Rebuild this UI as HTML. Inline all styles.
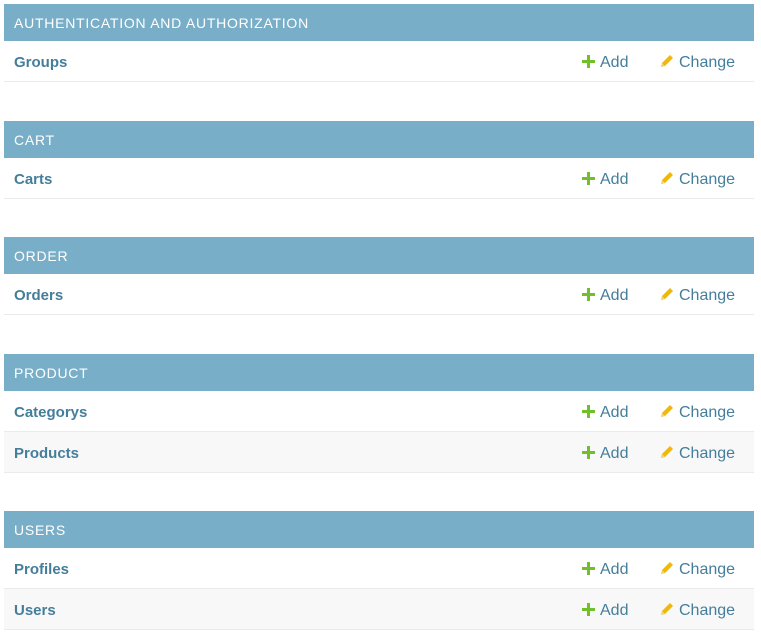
<!DOCTYPE html><html><head><style>
body{margin:0;background:#fff;font-family:"Liberation Sans",sans-serif;width:761px;height:636px;position:relative;overflow:hidden}
.h{position:absolute;left:4px;width:750px;height:37px;background:#79aec8;color:#fff;font-size:14px;line-height:38px;padding-left:10px;box-sizing:border-box;letter-spacing:.75px}
.r{position:absolute;left:4px;width:750px;height:41px;border-bottom:1px solid #eaeaea;box-sizing:border-box;line-height:43px;font-size:15px}
.r.alt{background:#f8f8f8}
.n{position:absolute;left:10px;font-weight:bold;color:#447e9b}
.a{position:absolute;left:578px;color:#447e9b;font-size:16px}
.c{position:absolute;left:656px;color:#447e9b;font-size:16px}
svg{vertical-align:-1px;margin-right:5px}
</style></head><body>
<div class="h" style="top:4px">AUTHENTICATION AND AUTHORIZATION</div>
<div class="r" style="top:41px"><span class="n">Groups</span><span class="a"><svg width="13" height="13"><path d="M5 0h3v5h5v3H8v5H5V8H0V5h5z" fill="#70bf2b"/></svg>Add</span><span class="c"><svg width="14" height="14"><path d="M1 13l1-4 8-8 3 3-8 8z" fill="#efb80b"/><path d="M1 13l1-4 3 3z" fill="#f5d26a"/></svg>Change</span></div>
<div class="h" style="top:121px">CART</div>
<div class="r" style="top:158px"><span class="n">Carts</span><span class="a"><svg width="13" height="13"><path d="M5 0h3v5h5v3H8v5H5V8H0V5h5z" fill="#70bf2b"/></svg>Add</span><span class="c"><svg width="14" height="14"><path d="M1 13l1-4 8-8 3 3-8 8z" fill="#efb80b"/><path d="M1 13l1-4 3 3z" fill="#f5d26a"/></svg>Change</span></div>
<div class="h" style="top:237px">ORDER</div>
<div class="r" style="top:274px"><span class="n">Orders</span><span class="a"><svg width="13" height="13"><path d="M5 0h3v5h5v3H8v5H5V8H0V5h5z" fill="#70bf2b"/></svg>Add</span><span class="c"><svg width="14" height="14"><path d="M1 13l1-4 8-8 3 3-8 8z" fill="#efb80b"/><path d="M1 13l1-4 3 3z" fill="#f5d26a"/></svg>Change</span></div>
<div class="h" style="top:354px">PRODUCT</div>
<div class="r" style="top:391px"><span class="n">Categorys</span><span class="a"><svg width="13" height="13"><path d="M5 0h3v5h5v3H8v5H5V8H0V5h5z" fill="#70bf2b"/></svg>Add</span><span class="c"><svg width="14" height="14"><path d="M1 13l1-4 8-8 3 3-8 8z" fill="#efb80b"/><path d="M1 13l1-4 3 3z" fill="#f5d26a"/></svg>Change</span></div>
<div class="r alt" style="top:432px"><span class="n">Products</span><span class="a"><svg width="13" height="13"><path d="M5 0h3v5h5v3H8v5H5V8H0V5h5z" fill="#70bf2b"/></svg>Add</span><span class="c"><svg width="14" height="14"><path d="M1 13l1-4 8-8 3 3-8 8z" fill="#efb80b"/><path d="M1 13l1-4 3 3z" fill="#f5d26a"/></svg>Change</span></div>
<div class="h" style="top:511px">USERS</div>
<div class="r" style="top:548px"><span class="n">Profiles</span><span class="a"><svg width="13" height="13"><path d="M5 0h3v5h5v3H8v5H5V8H0V5h5z" fill="#70bf2b"/></svg>Add</span><span class="c"><svg width="14" height="14"><path d="M1 13l1-4 8-8 3 3-8 8z" fill="#efb80b"/><path d="M1 13l1-4 3 3z" fill="#f5d26a"/></svg>Change</span></div>
<div class="r alt" style="top:589px"><span class="n">Users</span><span class="a"><svg width="13" height="13"><path d="M5 0h3v5h5v3H8v5H5V8H0V5h5z" fill="#70bf2b"/></svg>Add</span><span class="c"><svg width="14" height="14"><path d="M1 13l1-4 8-8 3 3-8 8z" fill="#efb80b"/><path d="M1 13l1-4 3 3z" fill="#f5d26a"/></svg>Change</span></div>
</body></html>
